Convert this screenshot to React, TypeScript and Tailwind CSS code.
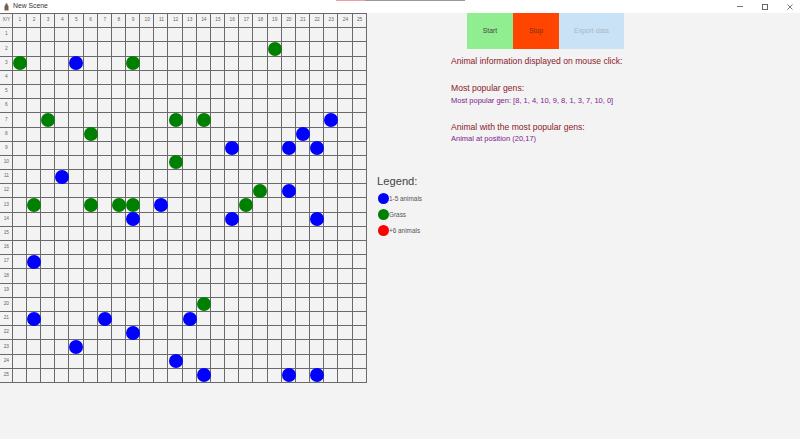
const GREEN = '#008000';
const BLUE = '#0000ff';

// [row, col]
const grass = [
  [2, 19], [3, 1], [3, 9], [7, 3], [7, 12], [7, 14], [8, 6], [10, 12],
  [12, 18], [13, 2], [13, 6], [13, 8], [13, 9], [13, 17], [20, 14],
];
const animals = [
  [3, 5], [7, 23], [8, 21], [9, 16], [9, 20], [9, 22], [11, 4], [12, 20],
  [13, 11], [14, 9], [14, 16], [14, 22], [17, 2], [21, 2], [21, 7], [21, 13],
  [22, 9], [23, 5], [24, 12], [25, 14], [25, 20], [25, 22],
];

const nums = Array.from({ length: 25 }, (_, i) => i + 1);

function has(list: number[][], row: number, col: number) {
  return list.some(([r, c]) => r === row && c === col);
}

function Cell({ row, col }: { row: number; col: number }) {
  const isHeader = row === 0 || col === 0;
  const color = has(grass, row, col) ? GREEN : has(animals, row, col) ? BLUE : null;
  let label = '';
  if (row === 0 && col === 0) label = 'X/Y';
  else if (row === 0) label = String(col);
  else if (col === 0) label = String(row);

  return (
    <div className="flex items-center justify-center pl-px border-r border-b border-[#6a6a6a] text-[4.8px] leading-none text-[#666]">
      {isHeader && label}
      {color && (
        <div
          className="w-[14px] h-[14px] shrink-0 rounded-full"
          style={{ backgroundColor: color }}
        />
      )}
    </div>
  );
}

function LegendItem({ color, label }: { color: string; label: string }) {
  return (
    <div className="flex items-center h-[11px]">
      <div className="w-[11px] h-[11px] rounded-full" style={{ backgroundColor: color }} />
      <span className="text-[6.4px] text-[#555]">{label}</span>
    </div>
  );
}

export default function App() {
  return (
    <div className="relative w-[800px] h-[439px] overflow-hidden flex flex-col bg-[#f3f3f3] font-['Liberation_Sans',sans-serif]">
      {/* window title bar */}
      <div className="relative h-[13px] shrink-0 flex items-center bg-white">
        <div className="absolute top-0 left-[336px] w-[29px] h-px bg-[#e8a0a8]" />
        <div className="absolute top-0 left-[365px] w-[100px] h-px bg-[#999]" />
        <svg className="ml-[4px]" width="5" height="8" viewBox="0 0 5 8">
          <path d="M1.5 0.5h2v1.5l1 1v4.5h-4v-4.5l1-1z" fill="#7a5c45" />
        </svg>
        <span className="ml-[4px] text-[6.8px] text-[#333]">New Scene</span>
        <div className="ml-auto flex items-center">
          <div className="w-[20px] flex justify-center">
            <div className="w-[6px] h-px bg-[#777]" />
          </div>
          <div className="w-[30px] flex justify-center">
            <div className="w-[6px] h-[6px] border border-[#666]" />
          </div>
          <div className="w-[20px] flex justify-center">
            <svg width="6" height="6" viewBox="0 0 6 6" stroke="#555" strokeWidth="0.8">
              <path d="M0.5 0.5l5 5M5.5 0.5l-5 5" />
            </svg>
          </div>
        </div>
      </div>

      <div className="flex flex-1 items-start">
        {/* board */}
        <div className="grid grid-cols-[12.75px_repeat(25,14.17px)] grid-rows-[repeat(26,14.2px)] w-[367px] border-t border-[#6a6a6a]">
          <Cell row={0} col={0} />
          {nums.map((c) => (
            <Cell key={c} row={0} col={c} />
          ))}
          {nums.map((r) => [
            <Cell key={`${r}-0`} row={r} col={0} />,
            ...nums.map((c) => <Cell key={`${r}-${c}`} row={r} col={c} />),
          ])}
        </div>

        {/* legend */}
        <div className="w-[74px] ml-[10px] mt-[161px] shrink-0 flex flex-col">
          <div className="text-[11.2px] leading-[14px] text-[#444]">Legend:</div>
          <div className="mt-[5px] pl-px flex flex-col gap-[5px]">
            <LegendItem color={BLUE} label="1-5 animals" />
            <LegendItem color={GREEN} label="Grass" />
            <LegendItem color="#ff0000" label="+6 animals" />
          </div>
        </div>

        {/* controls and info */}
        <div className="flex flex-col">
          <div className="flex ml-[16px] h-[36px] text-[6.8px]">
            <button className="w-[46px] bg-[#90ee90] text-[#444]">Start</button>
            <button className="w-[46px] bg-[#ff4500] text-[#7a3010]">Stop</button>
            <button className="w-[65px] bg-[#c9e2f6] text-[#a9b8c4]">Export data</button>
          </div>
          <div className="mt-[6px] text-[8.6px] leading-[12px] text-[#8b1a2b]">
            Animal information displayed on mouse click:
          </div>
          <div className="mt-[15px] text-[8.6px] leading-[12px] text-[#8b1a2b]">Most popular gens:</div>
          <div className="mt-[1px] text-[7.5px] leading-[11px] text-[#7d1a8c]">
            Most popular gen: [8, 1, 4, 10, 9, 8, 1, 3, 7, 10, 0]
          </div>
          <div className="mt-[15px] text-[8.6px] leading-[12px] text-[#8b1a2b]">
            Animal with the most popular gens:
          </div>
          <div className="text-[7.5px] leading-[11px] text-[#7d1a8c]">Animal at position (20,17)</div>
        </div>
      </div>
    </div>
  );
}
